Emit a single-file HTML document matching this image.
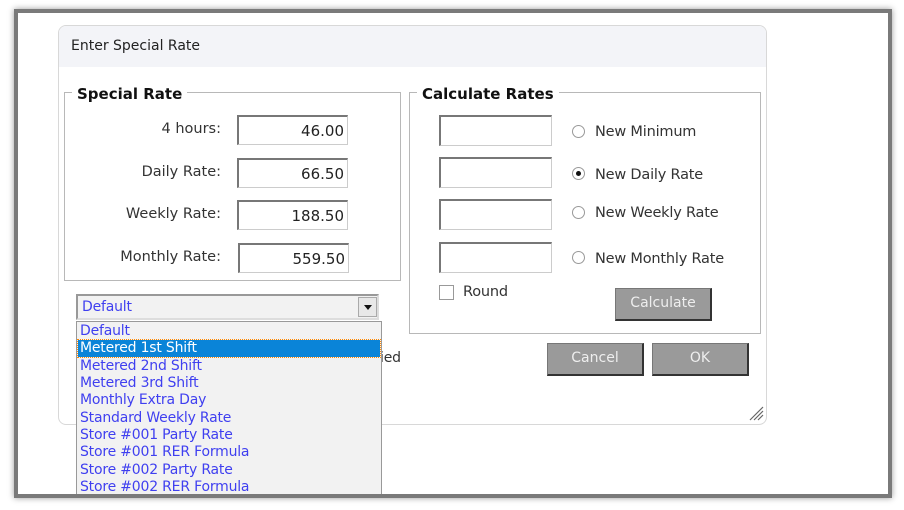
<!DOCTYPE html>
<html><head><style>
body{margin:0;width:904px;height:510px;background:#fff;position:relative;overflow:hidden;font-family:"Segoe UI","DejaVu Sans","Liberation Sans",sans-serif;}
.a{position:absolute}
.frame{left:14px;top:9px;width:870px;height:481px;border:4px solid #7a7a7a;box-shadow:0 0 6px rgba(0,0,0,.4);background:#fff}
.dlg{left:58px;top:25px;width:707px;height:398px;border:1px solid #d8d8d8;border-radius:8px;background:#fff;overflow:hidden}
.hdr{left:0;top:0;width:707px;height:41px;background:#f3f4f8;font-size:14px;color:#222;line-height:41px;text-indent:12px}
.fs{border:1px solid #b8b8b8}
.lg{font-weight:bold;font-size:15px;color:#111;background:#fff;padding:0 5px;line-height:18px}
.in{width:111px;height:30px;border:1px solid #ccc;border-top:2px solid #777;border-left:2px solid #777;background:#fff;font-size:15px;text-align:right;box-sizing:border-box;padding-right:3px;line-height:28px;color:#222}
.lb{font-size:14.5px;color:#333;text-align:right;width:150px}
.rd{width:11px;height:11px;border:1px solid #999;border-radius:50%;background:#fff}
.rt{font-size:14.5px;color:#333;letter-spacing:-.2px}
.bt{background:#9a9a9a;border:1px solid #777;border-right:2px solid #333;border-bottom:2px solid #333;color:#eee;font-size:14px;text-align:center;box-sizing:border-box}
.li{left:80px;font-size:14px;color:#3f3ff0;line-height:17px;font-family:"DejaVu Sans",sans-serif;letter-spacing:-.2px}
</style></head><body>
<div class="a frame"></div>
<div class="a dlg"><div class="a hdr">Enter Special Rate</div></div>
<div class="a fs" style="left:64px;top:92px;width:335px;height:187px"></div>
<div class="a lg" style="left:72px;top:85px">Special Rate</div>
<div class="a fs" style="left:409px;top:92px;width:350px;height:240px"></div>
<div class="a lg" style="left:417px;top:85px">Calculate Rates</div>

<div class="a lb" style="left:71px;top:121px">4 hours:</div>
<div class="a lb" style="left:71px;top:164px">Daily Rate:</div>
<div class="a lb" style="left:71px;top:206px">Weekly Rate:</div>
<div class="a lb" style="left:71px;top:249px">Monthly Rate:</div>
<div class="a in" style="left:237px;top:115px">46.00</div>
<div class="a in" style="left:237px;top:158px">66.50</div>
<div class="a in" style="left:237px;top:200px">188.50</div>
<div class="a in" style="left:238px;top:243px">559.50</div>

<div class="a in" style="left:439px;top:115px;width:113px;height:31px"></div>
<div class="a in" style="left:439px;top:157px;width:113px;height:31px"></div>
<div class="a in" style="left:439px;top:199px;width:113px;height:31px"></div>
<div class="a in" style="left:439px;top:242px;width:113px;height:31px"></div>
<div class="a rd" style="left:572px;top:125px"></div>
<div class="a rd" style="left:572px;top:167px"><div style="width:5px;height:5px;background:#111;border-radius:50%;margin:3px"></div></div>
<div class="a rd" style="left:572px;top:206px"></div>
<div class="a rd" style="left:572px;top:251px"></div>
<div class="a rt" style="left:595px;top:124px">New Minimum</div>
<div class="a rt" style="left:595px;top:167px">New Daily Rate</div>
<div class="a rt" style="left:595px;top:205px">New Weekly Rate</div>
<div class="a rt" style="left:595px;top:251px">New Monthly Rate</div>
<div class="a" style="left:439px;top:285px;width:13px;height:13px;border:1px solid #999;background:#fff"></div>
<div class="a rt" style="left:463px;top:284px">Round</div>
<div class="a bt" style="left:615px;top:288px;width:97px;height:33px;line-height:29px">Calculate</div>
<div class="a bt" style="left:547px;top:343px;width:97px;height:33px;line-height:29px">Cancel</div>
<div class="a bt" style="left:652px;top:343px;width:97px;height:33px;line-height:29px">OK</div>
<div class="a rt" style="left:380px;top:350px;font-size:14px">ied</div>
<svg class="a" style="left:748px;top:405px" width="16" height="16"><path d="M2 15L15 2M6 15L15 6M10 15L15 10" stroke="#666" stroke-width="1.2"/></svg>

<div class="a" style="left:76px;top:294px;width:303px;height:26px;border:2px solid #999;border-right-color:#ddd;border-bottom-color:#ddd;background:#f2f2f2;box-sizing:border-box"></div>
<div class="a li" style="left:82px;top:299px">Default</div>
<div class="a" style="left:358px;top:297px;width:19px;height:20px;background:#e8e8e8;border:1px solid #aaa;box-sizing:border-box"><div style="width:0;height:0;border-left:4px solid transparent;border-right:4px solid transparent;border-top:5px solid #111;margin:7px 0 0 5px"></div></div>
<div class="a" style="left:76px;top:321px;width:306px;height:175px;border:1px solid #999;border-bottom:none;background:#f2f2f2;box-sizing:border-box"></div>
<div class="a" style="left:78px;top:340px;width:302px;height:17px;background:#0a84d8;outline:1px dotted #f80"></div>
<div class="a li" style="top:323px">Default</div>
<div class="a li" style="top:340px;color:#fff">Metered 1st Shift</div>
<div class="a li" style="top:358px">Metered 2nd Shift</div>
<div class="a li" style="top:375px">Metered 3rd Shift</div>
<div class="a li" style="top:392px">Monthly Extra Day</div>
<div class="a li" style="top:410px">Standard Weekly Rate</div>
<div class="a li" style="top:427px">Store #001 Party Rate</div>
<div class="a li" style="top:444px">Store #001 RER Formula</div>
<div class="a li" style="top:462px">Store #002 Party Rate</div>
<div class="a li" style="top:479px">Store #002 RER Formula</div>
<div class="a" style="left:14px;top:494px;width:878px;height:4px;background:#7a7a7a"></div>
</body></html>
